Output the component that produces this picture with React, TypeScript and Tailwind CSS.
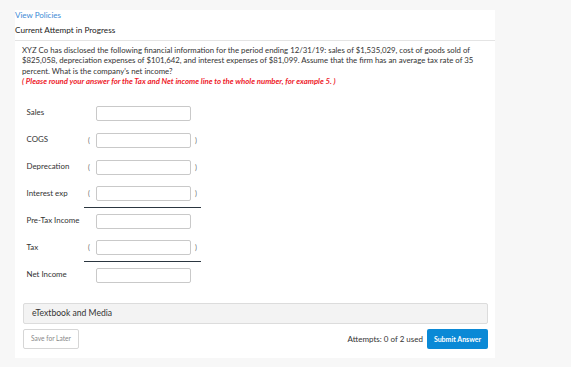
type Row = {
  label: string
  negative: boolean
  underline: boolean
}

const rows: Row[] = [
  { label: 'Sales', negative: false, underline: false },
  { label: 'COGS', negative: true, underline: false },
  { label: 'Deprecation', negative: true, underline: false },
  { label: 'Interest exp', negative: true, underline: true },
  { label: 'Pre-Tax Income', negative: false, underline: false },
  { label: 'Tax', negative: true, underline: true },
  { label: 'Net Income', negative: false, underline: false },
]

const LineItem = ({ row }: { row: Row }) => (
  <div className="flex h-[27px] items-center">
    <span className="w-[57.5px] text-[7.9px] text-[#333]">{row.label}</span>
    <div
      className={`flex h-full w-[117px] items-center pl-[4px] ${row.underline ? 'border-b border-[#2b3640]' : ''}`}
    >
      <span className={`w-[8px] text-[7px] text-[#666] ${row.negative ? '' : 'invisible'}`}>(</span>
      <input
        type="text"
        className="h-[15px] w-[95px] rounded-[2px] border border-[#c9c9c9] bg-white outline-none"
      />
      <span className={`pl-[4px] text-[7px] text-[#666] ${row.negative ? '' : 'invisible'}`}>)</span>
    </div>
  </div>
)

export default function App() {
  return (
    <div className="min-h-screen bg-[#f7f7f7] pt-[10px] font-['Lato',sans-serif]">
      <div className="ml-[15px] h-[348px] w-[480px] bg-white">
        <div className="h-[10px] text-[8px] leading-[10px] text-[#3b8ad6]">View Policies</div>
        <div className="mt-[5px] h-[11px] text-[8.2px] leading-[11px] text-[#222]">Current Attempt in Progress</div>
        <div className="mt-[4px] border-t border-[#e4e4e4]" />

        <div className="px-[7px] pt-[4px] text-[7.8px] leading-[10.4px] text-[#333]">
          <p className="whitespace-nowrap">
            XYZ Co has disclosed the following financial information for the period ending 12/31/19: sales of $1,535,029, cost of goods sold of
            <br />
            $825,058, depreciation expenses of $101,642, and interest expenses of $81,099. Assume that the firm has an average tax rate of 35
            <br />
            percent. What is the company's net income?
          </p>
          <p className="font-bold italic text-[#ee1c2b]">
            ( Please round your answer for the Tax and Net income line to the whole number, for example 5. )
          </p>
        </div>

        <div className="mt-[13px] pl-[11.5px]">
          {rows.map((row) => (
            <LineItem key={row.label} row={row} />
          ))}
        </div>

        <div className="ml-[8px] mt-[14.5px] flex h-[21px] w-[465px] items-center rounded-[2px] border border-[#dcdcdc] bg-[#f3f3f3] pl-[8px] text-[8.6px] text-[#333]">
          eTextbook and Media
        </div>

        <div className="mt-[5px] flex h-[20px] w-[473px] items-center justify-between pl-[8px]">
          <button className="h-full w-[56px] rounded-[2px] border border-[#d6d6d6] bg-white text-[6.6px] text-[#888]">
            Save for Later
          </button>
          <div className="flex h-full items-center">
            <span className="mr-[4px] text-[8px] text-[#333]">Attempts: 0 of 2 used</span>
            <button className="h-full w-[61px] rounded-[2px] bg-[#0a89d6] text-[7px] font-bold text-white">
              Submit Answer
            </button>
          </div>
        </div>
      </div>
    </div>
  )
}
